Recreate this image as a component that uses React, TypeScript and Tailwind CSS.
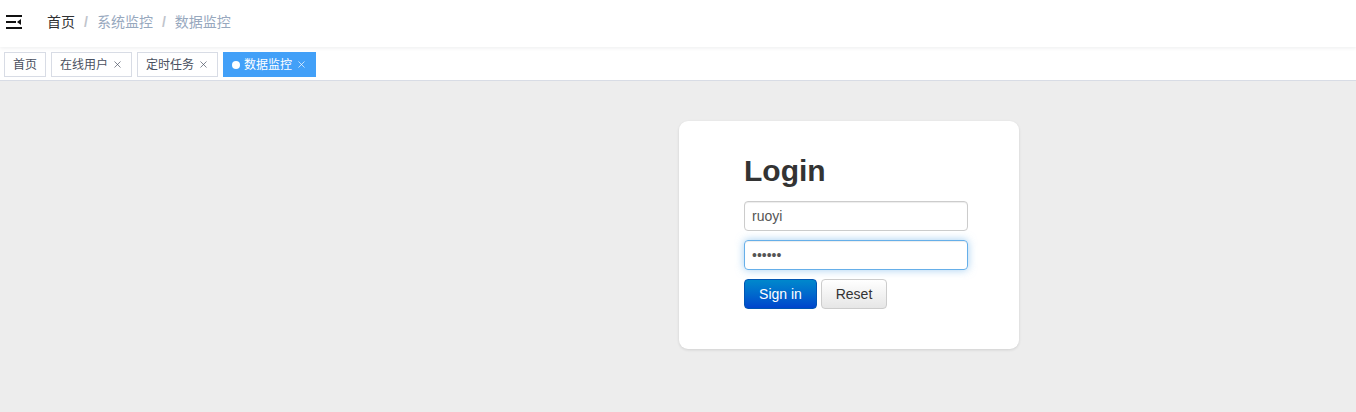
import { X } from 'lucide-react';

const cjk = { fontFamily: '"Helvetica Neue", "Liberation Sans", "Noto Sans CJK SC", sans-serif' };

function FoldIcon() {
  return (
    <svg width="16" height="14" viewBox="0 0 16 14" className="block">
      <rect x="0" y="0" width="16" height="2" fill="#111" />
      <rect x="0" y="6" width="10" height="2" fill="#111" />
      <polygon points="15,4 15,10 11,7" fill="#111" />
      <rect x="0" y="12" width="16" height="2" fill="#111" />
    </svg>
  );
}

const tags = [
  { name: '首页', closable: false, active: false },
  { name: '在线用户', closable: true, active: false },
  { name: '定时任务', closable: true, active: false },
  { name: '数据监控', closable: true, active: true },
];

export default function App() {
  return (
    <div className="min-h-[412px] flex flex-col bg-[#ededed] text-[#333]" style={cjk}>
      {/* Navbar */}
      <header className="h-[47px] bg-white flex items-center pb-[3px] shadow-[0_1px_4px_rgba(0,21,41,0.08)] relative z-10">
        <div className="pl-[6px] pr-[25px]">
          <FoldIcon />
        </div>
        <nav className="flex items-center text-[14px] leading-none">
          <span className="text-[#303133]">首页</span>
          <span className="mx-[9px] text-[#c0c4cc] font-bold">/</span>
          <span className="text-[#97a8be]">系统监控</span>
          <span className="mx-[9px] text-[#c0c4cc] font-bold">/</span>
          <span className="text-[#97a8be]">数据监控</span>
        </nav>
      </header>

      {/* Tags view */}
      <div className="h-[34px] bg-white border-b border-[#d8dce5] flex items-start pt-[5px] pl-[4px] gap-[5px]">
        {tags.map((t) => (
          <div
            key={t.name}
            className={
              t.active
                ? 'h-[25px] flex items-center px-[8px] text-[12px] border border-[#42a0f8] bg-[#42a0f8] text-white'
                : 'h-[25px] flex items-center px-[8px] text-[12px] border border-[#d8dce5] bg-white text-[#495060]'
            }
          >
            {t.active && <span className="w-[8px] h-[8px] rounded-full bg-white mr-[4px]" />}
            <span>{t.name}</span>
            {t.closable && <X size={11} strokeWidth={1.5} className="ml-[4px]" />}
          </div>
        ))}
      </div>

      {/* Content */}
      <main className="flex-1 pl-[679px] pt-[40px]">
        <div className="w-[340px] bg-white rounded-[9px] shadow-[0_1px_3px_rgba(0,0,0,0.12)] pl-[65px] pt-[30px] pb-[40px]" style={{ fontFamily: '"Liberation Sans", Arial, sans-serif' }}>
          <h2 className="text-[30px] font-bold leading-[40px] text-[#333] mb-[10px]">Login</h2>
          <input
            readOnly
            value="ruoyi"
            className="block w-[224px] h-[30px] px-[7px] text-[14px] text-[#555] border border-[#ccc] rounded-[4px] outline-none shadow-[inset_0_1px_1px_rgba(0,0,0,0.075)]"
          />
          <input
            readOnly
            type="password"
            value="123456"
            className="block mt-[9px] w-[224px] h-[30px] px-[7px] text-[14px] text-[#555] border border-[#66afe9] rounded-[4px] outline-none shadow-[inset_0_1px_1px_rgba(0,0,0,0.075),0_0_8px_rgba(102,175,233,0.6)]"
          />
          <div className="flex gap-[4px] mt-[9px]">
            <button className="w-[73px] h-[30px] text-[14px] text-white rounded-[4px] border border-[#0055b3] bg-gradient-to-b from-[#0088cc] to-[#0044cc]">
              Sign in
            </button>
            <button className="w-[66px] h-[30px] text-[14px] text-[#333] rounded-[4px] border border-[#ccc] bg-gradient-to-b from-white to-[#e6e6e6]">
              Reset
            </button>
          </div>
        </div>
      </main>
    </div>
  );
}
